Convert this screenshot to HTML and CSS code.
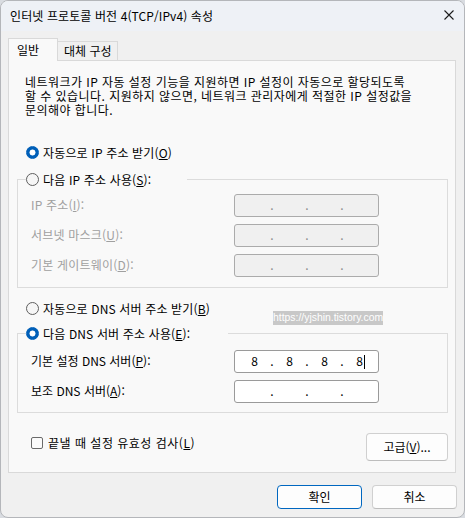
FILE: index.html
```html
<!DOCTYPE html>
<html lang="ko">
<head>
<meta charset="utf-8">
<title>인터넷 프로토콜 버전 4(TCP/IPv4) 속성</title>
<link rel="stylesheet" href="styles.css">
</head>
<body>
<div class="window">
  <div class="titlebar">
    <span class="title">인터넷 프로토콜 버전 4(TCP/IPv4) 속성</span>
    <svg class="close" width="10" height="10" viewBox="0 0 10 10"><path d="M0.5 0.5 L9.5 9.5 M9.5 0.5 L0.5 9.5" stroke="#1b1b1b" stroke-width="1.1" fill="none"/></svg>
  </div>
  <div class="content">
    <div class="tabs">
      <div class="tab active">일반</div>
      <div class="tab">대체 구성</div>
    </div>
    <div class="panel">
      <p class="desc"><span class="line">네트워크가 IP 자동 설정 기능을 지원하면 IP 설정이 자동으로 할당되도록</span><span class="line">할 수 있습니다. 지원하지 않으면, 네트워크 관리자에게 적절한 IP 설정값을</span><span class="line">문의해야 합니다.</span></p>
      <div class="radio-row first"><span class="radio on"></span><span>자동으로 IP 주소 받기(<u>O</u>)</span></div>
      <fieldset class="group group-ip">
        <legend class="legend-ip"><span class="radio"></span><span>다음 IP 주소 사용(<u>S</u>):</span></legend>
        <div class="fields">
          <span class="label disabled">IP 주소(<u>I</u>):</span>
          <div class="ipbox off"><span class="seg"></span><span class="dot">.</span><span class="seg"></span><span class="dot">.</span><span class="seg"></span><span class="dot">.</span><span class="seg"></span></div>
          <span class="label disabled">서브넷 마스크(<u>U</u>):</span>
          <div class="ipbox off"><span class="seg"></span><span class="dot">.</span><span class="seg"></span><span class="dot">.</span><span class="seg"></span><span class="dot">.</span><span class="seg"></span></div>
          <span class="label disabled">기본 게이트웨이(<u>D</u>):</span>
          <div class="ipbox off"><span class="seg"></span><span class="dot">.</span><span class="seg"></span><span class="dot">.</span><span class="seg"></span><span class="dot">.</span><span class="seg"></span></div>
        </div>
      </fieldset>
      <div class="radio-row dns"><span class="radio"></span><span>자동으로 DNS 서버 주소 받기(<u>B</u>)</span></div>
      <fieldset class="group group-dns">
        <legend class="legend-dns"><span class="radio on"></span><span>다음 DNS 서버 주소 사용(<u>E</u>):</span></legend>
        <div class="fields">
          <span class="label">기본 설정 DNS 서버(<u>P</u>):</span>
          <div class="ipbox"><span class="seg">8</span><span class="dot">.</span><span class="seg">8</span><span class="dot">.</span><span class="seg">8</span><span class="dot">.</span><span class="seg">8<span class="caret"></span></span></div>
          <span class="label">보조 DNS 서버(<u>A</u>):</span>
          <div class="ipbox"><span class="seg"></span><span class="dot">.</span><span class="seg"></span><span class="dot">.</span><span class="seg"></span><span class="dot">.</span><span class="seg"></span></div>
        </div>
      </fieldset>
      <div class="bottom-row">
        <div class="check-row"><span class="checkbox"></span><span class="check-text">끝낼 때 설정 유효성 검사(<u>L</u>)</span></div>
        <div class="btn adv">고급(<u>V</u>)...</div>
      </div>
    </div>
    <div class="buttons">
      <div class="btn default">확인</div>
      <div class="btn">취소</div>
    </div>
  </div>
  <div class="watermark">https://yjshin.tistory.com</div>
</div>
</body>
</html>
```

FILE: styles.css
```css
* { box-sizing: border-box; }
html, body { margin: 0; padding: 0; }
body {
  background: #d9dce1;
  font-family: "Noto Sans CJK KR", "Noto Sans", sans-serif;
  font-size: 12px;
  color: #000;
  width: 465px;
  height: 518px;
  overflow: hidden;
}
u { text-decoration: underline; text-underline-offset: 1px; }

.window {
  position: relative;
  width: 465px;
  height: 518px;
  border: 1px solid #b4b6ba;
  border-radius: 8px;
  background: #f0f0f0;
  overflow: hidden;
}

.titlebar {
  height: 30px;
  background: #eef1f6;
  display: flex;
  align-items: center;
  justify-content: space-between;
  padding: 0 10px 0 9px;
}
.title { line-height: 16px; letter-spacing: 0.1px; }
.close { display: block; margin-top: -2px; }

.content { padding: 8px 8px 0 7px; }

.tabs {
  display: flex;
  align-items: flex-end;
  height: 22px;
  position: relative;
  z-index: 1;
  margin-bottom: -1px;
}
.tab {
  height: 20px;
  width: 60px;
  padding-left: 6px;
  line-height: 18px;
  border: 1px solid #d9d9d9;
  border-left: none;
  border-bottom: 1px solid #d9d9d9;
  background: #f0f0f0;
}
.tab.active {
  height: 23px;
  width: 50px;
  padding-left: 8px;
  line-height: 21px;
  border-left: 1px solid #d9d9d9;
  border-bottom: none;
  background: #f9f9f9;
}

.panel {
  height: 413px;
  background: #f9f9f9;
  border: 1px solid #d9d9d9;
  padding: 0 7px 0 8px;
}

.desc {
  margin: 14px 0 0 8px;
  letter-spacing: 0.45px;
}
.desc .line {
  display: block;
  height: 14.2px;
  line-height: 14.2px;
  white-space: nowrap;
}

.radio-row {
  display: flex;
  align-items: center;
  gap: 4px;
  height: 16px;
  line-height: 16px;
  padding-left: 9px;
  letter-spacing: 0.15px;
}
.radio-row.first { margin-top: 27px; }
.radio-row.dns { margin-top: 13px; }

.radio {
  display: inline-block;
  width: 13px;
  height: 13px;
  border-radius: 50%;
  border: 1px solid #5f5f5f;
  background: #f6f6f6;
  flex: none;
}
.radio.on {
  border-color: #005fb8;
  background: radial-gradient(circle, #ffffff 0 2.7px, #005fb8 3.3px);
}

.group {
  margin: 0;
  border: 1px solid #dcdcdc;
  padding: 6px 0 10px 13px;
  min-width: 0;
}
.group-ip { margin-top: 11px; }
.group-dns { margin-top: 9px; padding-top: 8px; padding-bottom: 9px; }

legend {
  display: flex;
  align-items: center;
  gap: 4px;
  height: 16px;
  line-height: 16px;
  padding: 0;
  margin-left: -5px;
  letter-spacing: 0.15px;
}
.legend-ip { width: 161px; }
.legend-dns { width: 202px; }

.fields {
  display: grid;
  grid-template-columns: 203px 145px;
  grid-auto-rows: 23px;
  row-gap: 7px;
  align-items: center;
}
.label { line-height: 16px; }
.label.disabled { color: #a0a0a0; letter-spacing: 0.2px; }

.ipbox {
  height: 23px;
  border: 1px solid #9a9a9a;
  border-radius: 3px;
  background: #ffffff;
  display: flex;
  align-items: center;
  padding-left: 5px;
  line-height: 16px;
}
.ipbox.off { background: #f0f0f0; border-color: #ababab; color: #8a8a8a; }
.seg { width: 29px; text-align: center; }
.dot { width: 6px; text-align: center; }
.caret {
  display: inline-block;
  width: 1px;
  height: 14px;
  background: #000;
  vertical-align: -3px;
  margin-left: 1px;
  margin-right: -2px;
}

.bottom-row {
  display: flex;
  justify-content: space-between;
  align-items: flex-start;
  margin-top: 20px;
  padding: 0 0 0 14px;
}
.check-row {
  display: flex;
  align-items: center;
  gap: 5px;
  height: 16px;
  line-height: 16px;
  margin-top: 2px;
}
.check-text { letter-spacing: 0.5px; }
.checkbox {
  width: 12px;
  height: 12px;
  border: 1px solid #6a6a6a;
  border-radius: 2px;
  background: #fbfbfb;
}

.btn {
  height: 24px;
  width: 85px;
  border: 1px solid #d0d0d0;
  border-bottom-color: #bdbdbd;
  border-radius: 4px;
  background: #fdfdfd;
  text-align: center;
  line-height: 22px;
}
.btn.adv { width: 82px; height: 28px; line-height: 26px; }
.btn.default { border-color: #0067c0; }

.buttons {
  display: flex;
  justify-content: flex-end;
  gap: 10px;
  margin-top: 12px;
  margin-right: -1px;
}

.watermark {
  position: absolute;
  left: 272px;
  top: 310px;
  width: 110px;
  height: 14px;
  background: #c8c8c8;
  color: #ffffff;
  font-family: "Liberation Sans", sans-serif;
  font-size: 10.4px;
  line-height: 14px;
  text-align: center;
  white-space: nowrap;
}
```
